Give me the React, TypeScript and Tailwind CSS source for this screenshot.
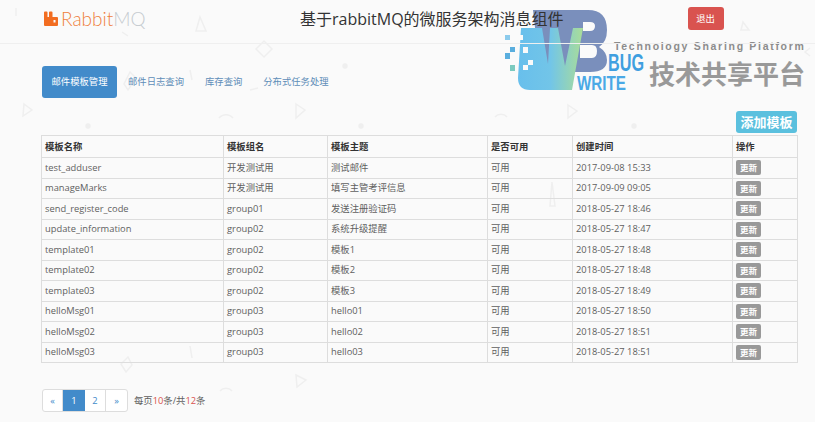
const rows = [
  ["test_adduser", "开发测试用", "测试邮件", "2017-09-08 15:33"],
  ["manageMarks", "开发测试用", "填写主管考评信息", "2017-09-09 09:05"],
  ["send_register_code", "group01", "发送注册验证码", "2018-05-27 18:46"],
  ["update_information", "group02", "系统升级提醒", "2018-05-27 18:47"],
  ["template01", "group02", "模板1", "2018-05-27 18:48"],
  ["template02", "group02", "模板2", "2018-05-27 18:48"],
  ["template03", "group02", "模板3", "2018-05-27 18:49"],
  ["helloMsg01", "group03", "hello01", "2018-05-27 18:50"],
  ["helloMsg02", "group03", "hello02", "2018-05-27 18:51"],
  ["helloMsg03", "group03", "hello03", "2018-05-27 18:51"],
];

function Pattern() {
  return (
    <svg className="absolute inset-0 pointer-events-none" width="815" height="422" fill="none" stroke="#efefef" strokeWidth="1.5">
      <path d="M200 17l6 14h-10z" />
      <path d="M264 41l8 8-8 8-8-8z" />
      <path d="M24 104l8 6-9 6z" />
      <path d="M296 104l9 6-9 8z" />
      <path d="M219 118a9 9 0 0 1 14 0" />
      <path d="M130 72l6 6-8 12-4-6z" />
      <path d="M122 32l6 4" />
      <path d="M190 70l2 10" />
      <path d="M250 90l8-2" />
      <path d="M743 22l6 8h-8z" />
      <path d="M568 105l9 6-9 7z" />
      <path d="M495 117a8 8 0 0 1 12 0" />
      <path d="M128 357l-7 7 5 8 6-7z" />
      <path d="M296 375l10 5-9 7z" />
      <path d="M220 391a8 8 0 0 1 12 0" />
      <path d="M190 346l2 12" />
      <path d="M552 182l-2 24h5z" />
      <path d="M16 8v8" />
      <path d="M810 48l-5 4 5 4" />
      <circle cx="88" cy="126" r="2" fill="#efefef" />
      <circle cx="345" cy="66" r="2" fill="#efefef" />
      <circle cx="361" cy="126" r="2" fill="#efefef" />
      <circle cx="634" cy="126" r="2" fill="#efefef" />
    </svg>
  );
}

function Watermark() {
  return (
    <div className="absolute left-[500px] top-0 w-[315px] h-[95px] pointer-events-none">
      <svg className="absolute left-0 top-0" width="150" height="95" viewBox="500 0 150 95">
        <defs>
          <linearGradient id="wb-w" x1="0" x2="1" y1="0" y2="0">
            <stop offset="0" stopColor="#68bfec" />
            <stop offset="0.5" stopColor="#72c5e8" />
            <stop offset="1" stopColor="#aadd98" />
          </linearGradient>
        </defs>
        <path
          fillRule="evenodd"
          fill="#7a8fbc"
          d="M533 10H588Q607 10 607 30Q607 42 599 47Q607 52 607 60Q607 72 590 72H540ZM583 22V31H590Q595 31 595 26Q595 22 590 22ZM580 45V58H592Q597 58 597 51Q597 45 592 45Z"
        />
        <path
          fill="url(#wb-w)"
          d="M521 28H542L548 64L550 28H558L565 66L573 28H583L572 90H530Q518 90 518 78Z"
        />
        <rect x="505" y="35" width="5" height="5" fill="#8ccbec" />
        <rect x="517" y="35" width="6" height="5" fill="#fafafa" />
        <rect x="510" y="47" width="5" height="5" fill="#5aaede" />
        <rect x="505" y="53" width="5" height="6" fill="#5aaede" />
        <rect x="510" y="65" width="5" height="6" fill="#7ccabf" />
        <rect x="523" y="47" width="5" height="6" fill="#fafafa" />
        <rect x="528" y="60" width="5" height="5" fill="#fafafa" />
        <rect x="523" y="65" width="5" height="5" fill="#fafafa" />
        <text x="608" y="71" textLength="36" lengthAdjust="spacingAndGlyphs" fontFamily="'Liberation Sans', sans-serif" fontWeight="700" fontSize="23" fill="#3f9fe0">BUG</text>
        <text x="577" y="90" textLength="49" lengthAdjust="spacingAndGlyphs" fontFamily="'Liberation Sans', sans-serif" fontWeight="700" fontSize="21" fill="#4aa9e6">WRITE</text>
      </svg>
      <div className="absolute left-[114px] top-[39px] text-[10.5px] leading-[14px] font-bold tracking-[1.7px] text-[#8c8c8c] whitespace-nowrap font-['Liberation_Sans',sans-serif]">
        Technology Sharing Platform
      </div>
      <div className="absolute left-[149px] top-[58px] text-[26px] leading-[32px] font-bold text-[#999] whitespace-nowrap">
        技术共享平台
      </div>
    </div>
  );
}

function Logo() {
  return (
    <div className="flex items-center gap-[3px] w-[300px] pl-[44px] -mt-[6px]">
      <svg width="14" height="15" viewBox="0 0 14 15">
        <path
          fill="#f26d21"
          fillRule="evenodd"
          d="M0 1.5Q0 .5 1 .5H2.5Q3.5 .5 3.5 1.5V6H5V1.5Q5 .5 6 .5H7.5Q8.5 .5 8.5 1.5V6H13Q14 6 14 7V14Q14 15 13 15H1Q0 15 0 14ZM9.5 9V11.5H11.5V9Z"
        />
      </svg>
      <div className="text-[19px] leading-[24px] font-light whitespace-nowrap font-['Lato',sans-serif]">
        <span className="text-[#ef7f3c]">Rabbit</span>
        <span className="text-[#c5cbd0]">MQ</span>
      </div>
    </div>
  );
}

export default function App() {
  return (
    <div className="relative w-[815px] h-[422px] overflow-hidden bg-[#fafafa] text-[9.33px] text-[#5f5f5f] font-['Open_Sans','Noto_Sans_CJK_SC',sans-serif]">
      <Pattern />
      <Watermark />
      <div className="relative">
        <header className="flex items-center h-[44px] border-b border-[#efefef]">
          <Logo />
          <h1 className="text-[16px] leading-[22px] text-[#333] whitespace-nowrap -mt-[6px]">基于rabbitMQ的微服务架构消息组件</h1>
          <button className="ml-[124px] -mt-[6px] w-[36px] h-[23px] rounded-[3px] bg-[#d9534f] text-white text-[9.33px]">退出</button>
        </header>

        <nav className="flex items-center gap-[1px] mt-[22px] ml-[42px] h-[32px]">
          <a className="h-[32px] w-[75px] flex items-center justify-center rounded-[3px] bg-[#428bca] text-white">邮件模板管理</a>
          <a className="h-[32px] flex items-center px-[10px] text-[#5e8db8]">邮件日志查询</a>
          <a className="h-[32px] flex items-center px-[10px] text-[#5e8db8]">库存查询</a>
          <a className="h-[32px] flex items-center px-[10px] text-[#5e8db8]">分布式任务处理</a>
        </nav>

        <div className="flex justify-end mt-[13px] mr-[18px]">
          <button className="w-[61px] h-[22px] rounded-[3px] bg-[#5bc0de] text-white text-[13px] leading-[22px] font-bold">添加模板</button>
        </div>

        <table className="mt-[2px] ml-[41px] w-[756px] table-fixed border-collapse border border-[#ddd]">
          <colgroup>
            <col className="w-[182px]" />
            <col className="w-[104px]" />
            <col className="w-[160px]" />
            <col className="w-[85px]" />
            <col className="w-[160px]" />
            <col className="w-[65px]" />
          </colgroup>
          <thead>
            <tr className="h-[22px] text-left text-[#333]">
              {["模板名称", "模板组名", "模板主题", "是否可用", "创建时间", "操作"].map((h) => (
                <th key={h} className="border border-[#ddd] px-[3px] py-0 font-bold">{h}</th>
              ))}
            </tr>
          </thead>
          <tbody>
            {rows.map((r) => (
              <tr key={r[0]} className="h-[20.5px]">
                <td className="border border-[#ddd] px-[3px] py-0">{r[0]}</td>
                <td className="border border-[#ddd] px-[3px] py-0">{r[1]}</td>
                <td className="border border-[#ddd] px-[3px] py-0">{r[2]}</td>
                <td className="border border-[#ddd] px-[3px] py-0">可用</td>
                <td className="border border-[#ddd] px-[3px] py-0">{r[3]}</td>
                <td className="border border-[#ddd] px-[3px] py-0">
                  <button className="block w-[25px] h-[15px] rounded-[2px] bg-[#999] text-white text-[8.5px] leading-[15px] font-bold">更新</button>
                </td>
              </tr>
            ))}
          </tbody>
        </table>

        <div className="flex items-center mt-[26px] ml-[42px] h-[23px]">
          <div className="flex h-[23px] rounded-[3px] border border-[#ddd] bg-white text-[#428bca]">
            <span className="w-[20px] flex items-center justify-center border-r border-[#ddd]">«</span>
            <span className="w-[22px] flex items-center justify-center bg-[#428bca] text-white">1</span>
            <span className="w-[21px] flex items-center justify-center border-r border-[#ddd]">2</span>
            <span className="w-[21px] flex items-center justify-center">»</span>
          </div>
          <div className="ml-[6px] text-[#5f5f5f] whitespace-nowrap">
            每页<span className="text-[#d9534f]">10</span>条/共<span className="text-[#d9534f]">12</span>条
          </div>
        </div>
      </div>
    </div>
  );
}
